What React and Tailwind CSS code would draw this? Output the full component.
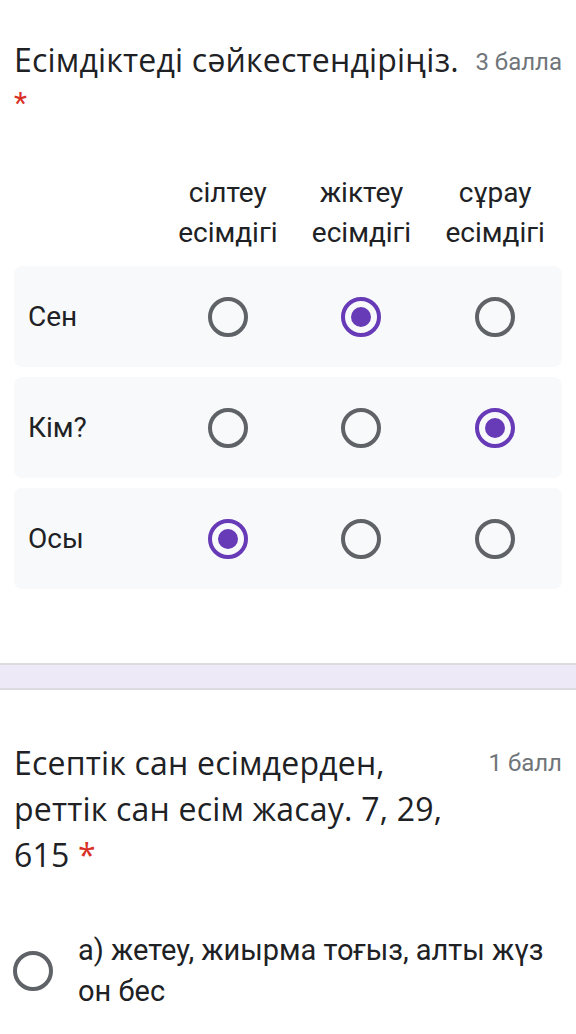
const rows = [
  { label: 'Сен', value: 1 },
  { label: 'Кім?', value: 2 },
  { label: 'Осы', value: 0 },
]

const columns = [
  ['сілтеу', 'есімдігі'],
  ['жіктеу', 'есімдігі'],
  ['сұрау', 'есімдігі'],
]

function Radio({ checked }) {
  return (
    <div className={`w-[40px] h-[40px] rounded-full border-[4px] flex items-center justify-center ${checked ? 'border-[#673ab7]' : 'border-[#5f6368]'}`}>
      {checked && <div className="w-[20px] h-[20px] rounded-full bg-[#673ab7]" />}
    </div>
  )
}

export default function App() {
  return (
    <div className="w-[576px] h-[1034px] bg-white overflow-hidden text-[#202124] font-['Roboto',sans-serif]">
      <div className="px-[14px] pt-[37px]">
        <div className="flex items-start justify-between">
          <h2 className="font-['Open_Sans',sans-serif] text-[32px] leading-[46px] tracking-[0.2px]">Есімдіктеді сәйкестендіріңіз.</h2>
          <span className="text-[24px] leading-[46px] text-[#70757a] mt-[2px]">3 балла</span>
        </div>
        <div className="text-[#d93025] text-[30px] leading-[28px] mt-[4px]">*</div>

        <div className="grid grid-cols-[147px_1fr_1fr_1fr] mt-[56px] text-[28px] leading-[40px] text-center">
          <div />
          {columns.map((c, i) => (
            <div key={i}>
              <div>{c[0]}</div>
              <div>{c[1]}</div>
            </div>
          ))}
        </div>

        <div className="mt-[13px] flex flex-col gap-[10px]">
          {rows.map(r => (
            <div key={r.label} className="grid grid-cols-[147px_1fr_1fr_1fr] items-center h-[101px] bg-[#f8f9fa] rounded-lg">
              <div className="pl-[14px] text-[28px]">{r.label}</div>
              {[0, 1, 2].map(i => (
                <div key={i} className="flex justify-center">
                  <Radio checked={r.value === i} />
                </div>
              ))}
            </div>
          ))}
        </div>
      </div>

      <div className="mt-[74px] h-[27px] bg-[#ede9f7] border-y-2 border-[#dadce0]" />

      <div className="px-[14px] pt-[50px]">
        <div className="flex items-start justify-between">
          <h2 className="font-['Open_Sans',sans-serif] text-[32px] leading-[46px] tracking-[0.2px]">
            Есептік сан есімдерден,<br />
            реттік сан есім жасау. 7, 29,<br />
            615 <span className="text-[#d93025]">*</span>
          </h2>
          <span className="text-[24px] leading-[46px] text-[#70757a]">1 балл</span>
        </div>

        <div className="flex items-center mt-[52px]">
          <div className="-ml-[1px] pr-[25px]">
            <Radio checked={false} />
          </div>
          <div className="text-[29px] leading-[41px]">а) жетеу, жиырма тоғыз, алты жүз<br />он бес</div>
        </div>
      </div>
    </div>
  )
}
